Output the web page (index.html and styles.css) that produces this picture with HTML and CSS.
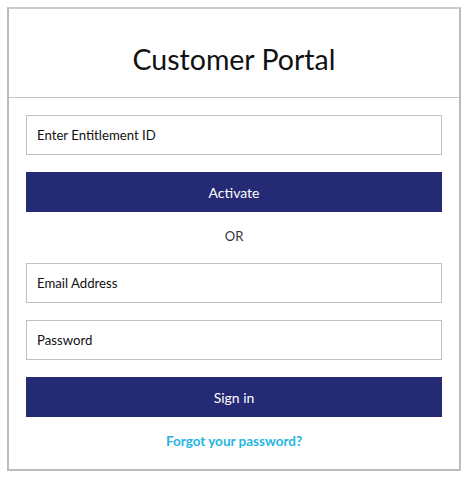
FILE: index.html
```html
<!DOCTYPE html>
<html>
<head>
<meta charset="utf-8">
<link rel="stylesheet" href="styles.css">
</head>
<body>
<div class="card">
  <div class="card-header">
    <h1 class="title">Customer Portal</h1>
  </div>
  <div class="card-body">
    <div class="field">Enter Entitlement ID</div>
    <button class="btn">Activate</button>
    <div class="or">OR</div>
    <div class="field">Email Address</div>
    <div class="field field-gap">Password</div>
    <button class="btn">Sign in</button>
    <a class="forgot" href="#">Forgot your password?</a>
  </div>
</div>
</body>
</html>
```
FILE: styles.css
```css
html, body {
  margin: 0;
  padding: 0;
  background: #ffffff;
}
body {
  padding: 7px 0 0 7px;
  font-family: "Lato", "Noto Sans", sans-serif;
  color: #111;
}
.card {
  width: 454px;
  height: 464px;
  border: 2px solid #b7bdc0;
  border-top-color: #c9cdcf;
  background: #fff;
  box-sizing: border-box;
  display: flex;
  flex-direction: column;
}
.card-header {
  height: 89px;
  border-bottom: 1px solid #c2c5c7;
  display: flex;
  align-items: center;
  justify-content: center;
  box-sizing: border-box;
  padding-top: 11px;
}
.title {
  margin: 0;
  font-weight: 400;
  font-size: 28.5px;
  color: #111;
}
.card-body {
  padding: 17px 17px 0 17px;
  display: flex;
  flex-direction: column;
  align-items: stretch;
}
.field {
  height: 40px;
  border: 1px solid #c0c0c0;
  box-sizing: border-box;
  display: flex;
  align-items: center;
  padding-left: 10px;
  font-size: 13.2px;
  color: #111;
}
.field-gap {
  margin-top: 17px;
}
.btn {
  height: 40px;
  border: none;
  background: #252a75;
  color: #fff;
  font-family: inherit;
  font-size: 14px;
  margin-top: 17px;
  padding: 0;
}
.or {
  height: 51px;
  box-sizing: border-box;
  padding-bottom: 3px;
  display: flex;
  align-items: center;
  justify-content: center;
  font-size: 13px;
  color: #333;
}
.forgot {
  margin-top: 16px;
  text-align: center;
  color: #1fb6e0;
  font-size: 13.5px;
  font-weight: 700;
  text-decoration: none;
}
```
